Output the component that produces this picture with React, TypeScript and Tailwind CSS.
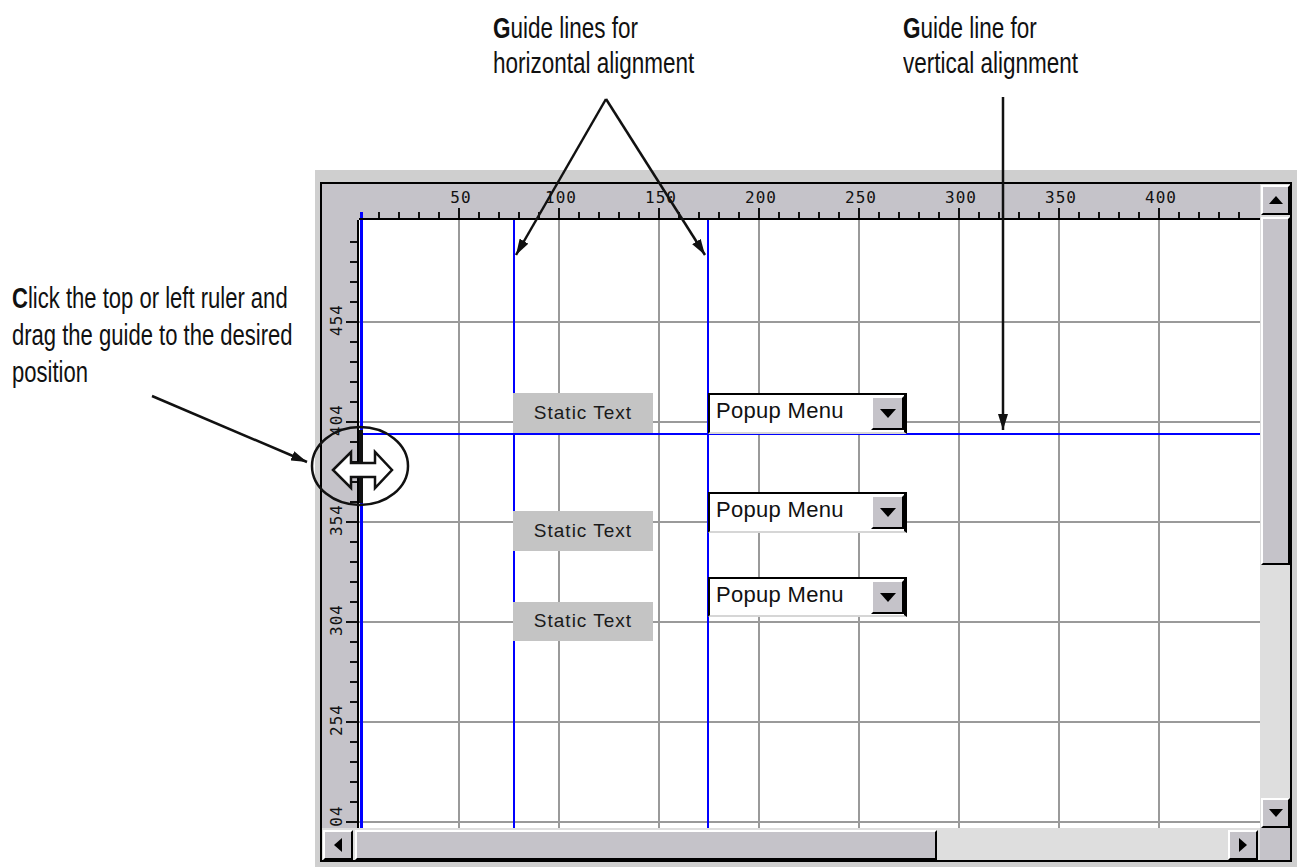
import React from "react";

const rulerBg = "bg-[#c5c3c9]";
const topTicks = Array.from({ length: 44 }, (_, i) => (i + 1) * 20);
const topLabels = [50, 100, 150, 200, 250, 300, 350, 400];
const leftTicks = Array.from({ length: 30 }, (_, i) => 22 + i * 20);
const leftLabels = [
  { y: 100, t: "454" },
  { y: 200, t: "404" },
  { y: 300, t: "354" },
  { y: 400, t: "304" },
  { y: 500, t: "254" },
  { y: 596, t: "04" },
];
const vGrid = [100, 200, 300, 400, 500, 600, 700, 800];
const hGrid = [102, 202, 302, 402, 502, 602];
const statics = [
  { y: 173, h: 40 },
  { y: 291, h: 40 },
  { y: 382, h: 39 },
];
const popups = [
  { y: 173, h: 41 },
  { y: 272, h: 41 },
  { y: 357, h: 40 },
];

function Tri({ dir, w, h }: { dir: "up" | "down" | "left" | "right"; w: number; h: number }) {
  const pts = {
    up: `0,${h} ${w / 2},0 ${w},${h}`,
    down: `0,0 ${w},0 ${w / 2},${h}`,
    left: `${w},0 ${w},${h} 0,${h / 2}`,
    right: `0,0 ${w},${h / 2} 0,${h}`,
  }[dir];
  return (
    <svg width={w} height={h} viewBox={`0 0 ${w} ${h}`}>
      <polygon points={pts} fill="#000" />
    </svg>
  );
}

function Bevel({ className, children }: { className: string; children?: React.ReactNode }) {
  return (
    <div
      className={`flex items-center justify-center ${rulerBg} border-2 border-t-white border-l-white border-r-black border-b-black ${className}`}
    >
      {children}
    </div>
  );
}

function Popup({ y, h }: { y: number; h: number }) {
  return (
    <div
      className="absolute left-[349px] w-[199px] flex items-start bg-white border-t-2 border-l-2 border-r-[3px] border-black border-b-2 border-b-[#d6d6d6]"
      style={{ top: y, height: h }}
    >
      <div className="h-full flex items-center pb-[6px] pl-[6px] text-[22px] tracking-[0.3px] text-[#111] font-['Liberation_Sans',Arial,sans-serif] whitespace-nowrap">
        Popup Menu
      </div>
      <Bevel className="ml-auto mt-[1px] w-[33px] h-[34px]">
        <Tri dir="down" w={16} h={9} />
      </Bevel>
    </div>
  );
}

function StaticText({ y, h }: { y: number; h: number }) {
  return (
    <div
      className="absolute left-[154px] w-[140px] flex items-center justify-center bg-[#c4c4c4] text-[19px] tracking-[1px] text-[#1a1a1a] font-['Liberation_Sans',Arial,sans-serif]"
      style={{ top: y, height: h }}
    >
      Static Text
    </div>
  );
}

export default function App() {
  return (
    <div className="relative w-[1297px] h-[867px] overflow-hidden bg-white pt-[170px]">
      {/* the layout window */}
      <div className="ml-[315px] w-[982px] bg-[#cfcfcf] pt-[12px] pl-[5px] pr-[5px] pb-[5px]">
        <div className="border-2 border-black grid grid-cols-[37px_901px_30px] grid-rows-[36px_608px_32px]">
          <div className={rulerBg} />

          {/* top ruler */}
          <div className={`relative overflow-hidden border-b-2 border-black ${rulerBg}`}>
            {topTicks.map((x) => (
              <div
                key={x}
                className={`absolute bottom-0 w-[2px] bg-[#111] ${x % 100 === 0 ? "h-[10px]" : "h-[6px]"}`}
                style={{ left: x - 1 }}
              />
            ))}
            <div className="absolute left-[1px] bottom-0 w-[3px] h-[6px] bg-[#0000ff]" />
            {topLabels.map((n) => (
              <div key={n} className="absolute top-[7px] w-0" style={{ left: (n / 50) * 100 + 2 }}>
                <span className="absolute -translate-x-1/2 text-[16px] leading-[14px] tracking-[1px] text-[#111] font-['DejaVu_Sans_Mono',monospace]">
                  {n}
                </span>
              </div>
            ))}
          </div>

          {/* vertical scrollbar */}
          <div className="row-span-2 flex flex-col bg-[#dedede] pl-[1px] pt-[1px]">
            <Bevel className="h-[30px]">
              <Tri dir="up" w={14} h={8} />
            </Bevel>
            <Bevel className="mt-[2px] h-[348px]" />
            <div className="flex-1" />
            <Bevel className="h-[30px]">
              <Tri dir="down" w={14} h={8} />
            </Bevel>
          </div>

          {/* left ruler */}
          <div className={`relative overflow-hidden border-r-2 border-black ${rulerBg}`}>
            {leftTicks.map((y) => (
              <div
                key={y}
                className={`absolute right-0 h-[2px] bg-[#111] ${(y - 2) % 100 === 0 ? "w-[11px]" : "w-[7px]"}`}
                style={{ top: y - 1 }}
              />
            ))}
            {leftLabels.map((l) => (
              <div key={l.t} className="absolute left-[15px] w-0 h-0" style={{ top: l.y }}>
                <span className="absolute -translate-x-1/2 -translate-y-1/2 -rotate-90 text-[16px] leading-[14px] tracking-[1px] text-[#111] font-['DejaVu_Sans_Mono',monospace]">
                  {l.t}
                </span>
              </div>
            ))}
          </div>

          {/* canvas */}
          <div className="relative overflow-hidden bg-white">
            {vGrid.map((x) => (
              <div key={x} className="absolute top-0 bottom-0 w-[2px] bg-[#9a9a9a]" style={{ left: x - 1 }} />
            ))}
            {hGrid.map((y) => (
              <div key={y} className="absolute left-0 right-0 h-[2px] bg-[#9a9a9a]" style={{ top: y - 1 }} />
            ))}
            <div className="absolute top-0 bottom-0 left-[1px] w-[3px] bg-[#0000ff]" />
            <div className="absolute top-0 bottom-0 left-[154px] w-[2px] bg-[#0000ff]" />
            <div className="absolute top-0 bottom-0 left-[348px] w-[2px] bg-[#0000ff]" />
            <div className="absolute left-0 right-0 top-[213px] h-[2px] bg-[#0000ff]" />
            {statics.map((s) => (
              <StaticText key={s.y} y={s.y} h={s.h} />
            ))}
            {popups.map((p) => (
              <Popup key={p.y} y={p.y} h={p.h} />
            ))}
          </div>

          {/* horizontal scrollbar */}
          <div className="col-span-2 flex items-start bg-[#dedede] pl-[1px] pt-[2px]">
            <Bevel className="w-[30px] h-[30px]">
              <Tri dir="left" w={8} h={14} />
            </Bevel>
            <Bevel className="ml-[2px] w-[582px] h-[30px]" />
            <div className="flex-1" />
            <Bevel className="mr-[2px] w-[30px] h-[30px]">
              <Tri dir="right" w={8} h={14} />
            </Bevel>
          </div>
          <div className={rulerBg} />
        </div>
      </div>

      {/* callouts */}
      <div className="absolute left-[493px] top-[11px] origin-left scale-x-[0.775] whitespace-nowrap text-[29px] leading-[35px] text-[#111] font-['Liberation_Sans',Arial,sans-serif]">
        <div>
          <span className="font-bold">G</span>uide lines for
        </div>
        <div>horizontal alignment</div>
      </div>
      <div className="absolute left-[903px] top-[11px] origin-left scale-x-[0.775] whitespace-nowrap text-[29px] leading-[35px] text-[#111] font-['Liberation_Sans',Arial,sans-serif]">
        <div>
          <span className="font-bold">G</span>uide line for
        </div>
        <div>vertical alignment</div>
      </div>
      <div className="absolute left-[12px] top-[280px] origin-left scale-x-[0.76] whitespace-nowrap text-[29px] leading-[37px] text-[#111] font-['Liberation_Sans',Arial,sans-serif]">
        <div>
          <span className="font-bold">C</span>lick the top or left ruler and
        </div>
        <div>drag the guide to the desired</div>
        <div>position</div>
      </div>

      <svg className="absolute inset-0 pointer-events-none" width="1297" height="867" viewBox="0 0 1297 867">
        <defs>
          <marker
            id="head"
            viewBox="0 0 16 10"
            refX="16"
            refY="5"
            markerWidth="16"
            markerHeight="10"
            markerUnits="userSpaceOnUse"
            orient="auto"
          >
            <path d="M0 0 L16 5 L0 10 z" fill="#111" />
          </marker>
        </defs>
        <g stroke="#111" strokeWidth="2.5" fill="none">
          <line x1="606" y1="99" x2="516" y2="255" markerEnd="url(#head)" />
          <line x1="606" y1="99" x2="705" y2="255" markerEnd="url(#head)" />
          <line x1="1003" y1="97" x2="1003" y2="430" markerEnd="url(#head)" />
          <line x1="152" y1="396" x2="307" y2="462" markerEnd="url(#head)" />
        </g>
        <rect x="359" y="430" width="4" height="73" fill="#111" />
        <ellipse cx="360" cy="466" rx="48" ry="39" stroke="#111" strokeWidth="2.5" fill="none" />
        <polygon
          points="333,470 351,452 351,463 375,463 375,452 392,470 375,488 375,477 351,477 351,488"
          fill="#fff"
          stroke="#111"
          strokeWidth="2.5"
          strokeLinejoin="miter"
        />
      </svg>
    </div>
  );
}
